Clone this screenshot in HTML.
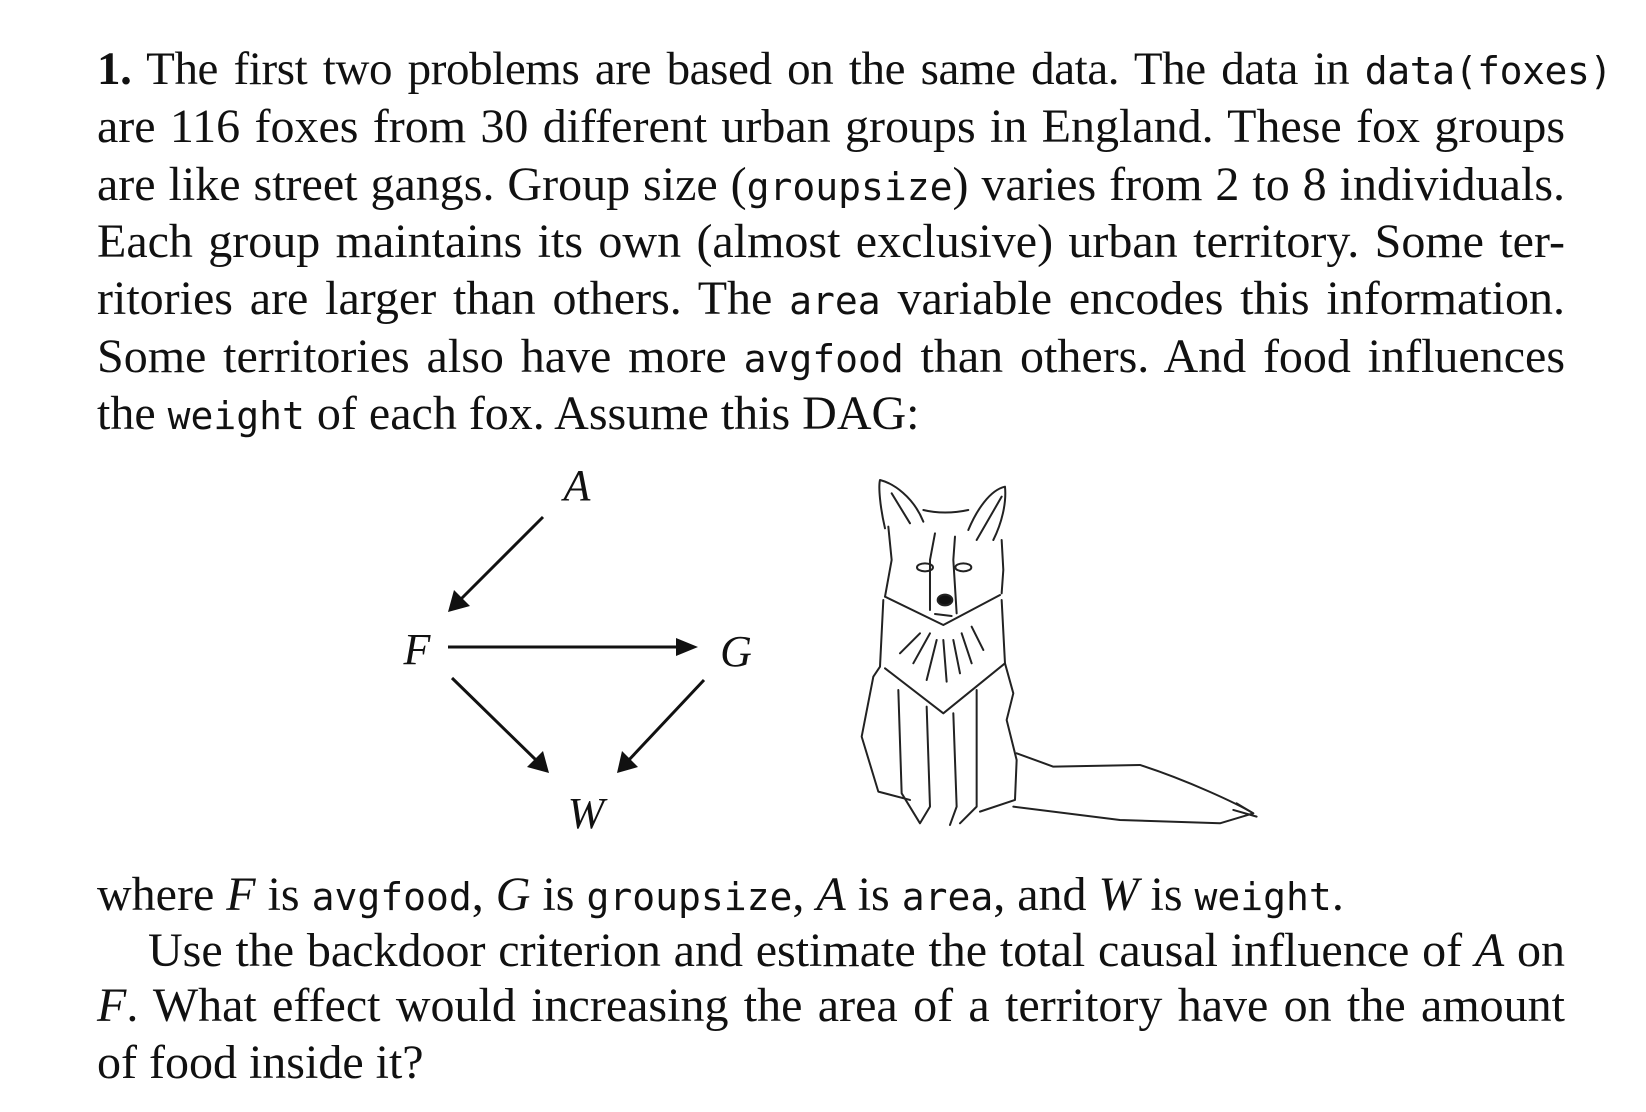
<!DOCTYPE html>
<html><head><meta charset="utf-8"><style>
html,body{margin:0;padding:0;background:#fff;}
body{width:1646px;height:1112px;position:relative;overflow:hidden;font-family:"Liberation Serif",serif;color:#111;}
.l{position:absolute;left:97px;width:1468px;font-size:48px;line-height:58px;height:58px;white-space:normal;}
.j{text-align:justify;text-align-last:justify;}
code{font-family:"DejaVu Sans Mono","Liberation Mono",monospace;font-size:38px;}
i{font-style:italic;}
</style></head><body>
<div class="l j" style="top:40px;width:1515px;font-size:47px;letter-spacing:-0.4px;"><b>1.</b> The first two problems are based on the same data. The data in <code>data(foxes)</code></div>
<div class="l j" style="top:98px;">are 116 foxes from 30 different urban groups in England. These fox groups</div>
<div class="l j" style="top:156px;">are like street gangs. Group size (<code>groupsize</code>) varies from 2 to 8 individuals.</div>
<div class="l j" style="top:213px;">Each group maintains its own (almost exclusive) urban territory. Some ter-</div>
<div class="l j" style="top:270px;">ritories are larger than others. The <code>area</code> variable encodes this information.</div>
<div class="l j" style="top:328px;">Some territories also have more <code>avgfood</code> than others. And food influences</div>
<div class="l" style="top:385px;">the <code>weight</code> of each fox. Assume this DAG:</div>

<svg width="1646" height="1112" style="position:absolute;left:0;top:0" xmlns="http://www.w3.org/2000/svg">
<g font-family="Liberation Serif" font-style="italic" font-size="44" fill="#111" text-anchor="middle">
<text x="577" y="500">A</text>
<text x="417" y="664">F</text>
<text x="736" y="666">G</text>
<text x="586" y="828">W</text>
</g>
<g stroke="#111" stroke-width="3" fill="none">
<line x1="543" y1="517" x2="458" y2="602"/>
<line x1="448" y1="647" x2="682" y2="647"/>
<line x1="452" y1="678" x2="538" y2="762"/>
<line x1="704" y1="680" x2="627" y2="762"/>
</g>
<g fill="#111">
<polygon points="448,612 454,590 470,606"/>
<polygon points="698,647 676,638 676,656"/>
<polygon points="549,773 527,767 543,751"/>
<polygon points="617,773 622,751 638,767"/>
</g>
<g transform="translate(820,460) scale(0.3333)" stroke="#222" stroke-width="6" fill="none" stroke-linecap="round" stroke-linejoin="round">
<path d="M195,205 C180,140 175,80 180,60 C220,70 280,110 310,185"/>
<path d="M215,100 L270,190"/>
<path d="M310,150 C350,160 400,160 445,150"/>
<path d="M445,210 C470,150 510,90 555,80 C560,130 545,190 520,240"/>
<path d="M470,240 L545,110"/>
<path d="M205,200 L215,300 L195,410"/>
<path d="M545,240 L550,330 L545,400"/>
<path d="M195,410 L370,495 L540,405"/>
<path d="M345,220 L330,300 L330,450"/>
<path d="M405,230 L400,300 L410,460"/>
<ellipse cx="315" cy="322" rx="24" ry="12"/>
<ellipse cx="430" cy="322" rx="24" ry="12"/>
<ellipse cx="375" cy="420" rx="22" ry="16" fill="#111"/>
<path d="M345,462 L395,468"/>
<path d="M240,580 L300,520 M280,610 L330,520 M320,660 L350,540 M380,665 L370,540 M420,640 L400,540 M455,610 L425,520 M490,570 L455,500"/>
<path d="M190,420 L180,620 L160,650 L125,830 L175,995 L270,1020"/>
<path d="M195,625 L370,760 L555,610"/>
<path d="M545,420 L555,610 L580,700 L560,780 L590,900 L585,1020 L480,1055"/>
<path d="M235,690 L245,1000 L300,1090 L330,1040 L320,740"/>
<path d="M400,760 L410,1040 L390,1095"/>
<path d="M470,690 L470,1040 L420,1090"/>
<path d="M590,880 L700,920 L960,915 C1100,960 1250,1030 1300,1060 L1200,1090 L900,1080 L580,1040"/>
<path d="M1240,1050 L1310,1070 M1250,1030 L1300,1060"/>
</g>
</svg>

<div class="l" style="top:866px;">where <i>F</i> is <code>avgfood</code>, <i>G</i> is <code>groupsize</code>, <i>A</i> is <code>area</code>, and <i>W</i> is <code>weight</code>.</div>
<div class="l j" style="top:922px;left:148px;width:1417px;">Use the backdoor criterion and estimate the total causal influence of <i>A</i> on</div>
<div class="l j" style="top:977px;"><i>F</i>. What effect would increasing the area of a territory have on the amount</div>
<div class="l" style="top:1034px;">of food inside it?</div>
</body></html>
